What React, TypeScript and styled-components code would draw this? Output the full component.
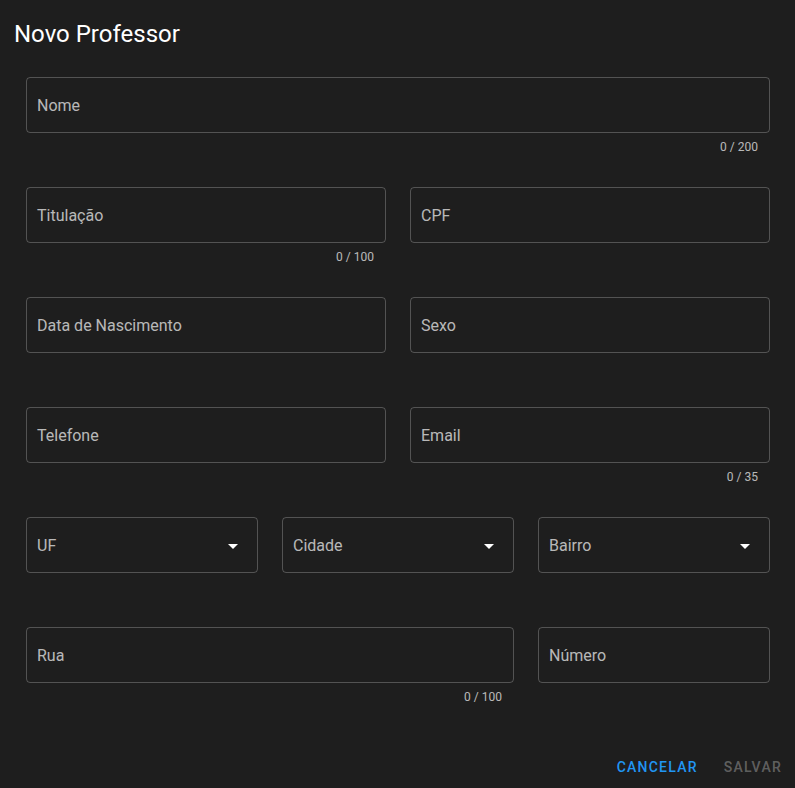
import React from "react";
import styled, { createGlobalStyle } from "styled-components";

const Global = createGlobalStyle`
  html, body { margin: 0; padding: 0; background: #1e1e1e; }
  body { font-family: Roboto, "Liberation Sans", sans-serif; -webkit-font-smoothing: antialiased; }
  * { box-sizing: border-box; }
`;

const Card = styled.div`
  width: 795px;
  height: 788px;
  background: #1e1e1e;
  color: #fff;
  display: flex;
  flex-direction: column;
  overflow: hidden;
`;

const Title = styled.div`
  padding: 18px 12px 0 14px;
  font-size: 24px;
  line-height: 32px;
  font-weight: 400;
  color: #ffffff;
`;

const Form = styled.div`
  padding: 27px 25px 0 26px;
  display: flex;
  flex-direction: column;
`;

const Row = styled.div<{ $cols: number }>`
  display: grid;
  grid-template-columns: repeat(${(p) => p.$cols}, 1fr);
  column-gap: 24px;
`;

const Cell = styled.div<{ $span?: number }>`
  grid-column: span ${(p) => p.$span ?? 1};
  height: 110px;
  display: flex;
  flex-direction: column;
`;

const Box = styled.div`
  height: 56px;
  border: 1px solid rgba(255, 255, 255, 0.24);
  border-radius: 4px;
  display: flex;
  align-items: center;
  justify-content: space-between;
  padding: 2px 12px 0 10px;
`;

const Label = styled.span`
  font-size: 16px;
  color: rgba(255, 255, 255, 0.7);
  line-height: 20px;
`;

const Counter = styled.div`
  margin-top: 8px;
  padding-right: 12px;
  text-align: right;
  font-size: 12px;
  line-height: 12px;
  color: rgba(255, 255, 255, 0.7);
`;

const Arrow = styled.svg`
  width: 24px;
  height: 24px;
  fill: #ffffff;
`;

const Actions = styled.div`
  display: flex;
  justify-content: flex-end;
  align-items: center;
  gap: 10px;
  padding: 12px 5px 0 0;
`;

const Btn = styled.button<{ $primary?: boolean }>`
  height: 36px;
  padding: 0 8px;
  background: transparent;
  border: none;
  font-family: Roboto, "Liberation Sans", sans-serif;
  font-size: 14px;
  font-weight: 500;
  letter-spacing: 1.25px;
  text-transform: uppercase;
  color: ${(p) => (p.$primary ? "#2196f3" : "rgba(255,255,255,0.3)")};
  cursor: ${(p) => (p.$primary ? "pointer" : "default")};
`;

type FieldProps = { label: string; counter?: string; select?: boolean; span?: number };

const Field = ({ label, counter, select, span }: FieldProps) => (
  <Cell $span={span}>
    <Box>
      <Label>{label}</Label>
      {select && (
        <Arrow viewBox="0 0 24 24">
          <path d="M7,10L12,15L17,10H7Z" />
        </Arrow>
      )}
    </Box>
    {counter && <Counter>{counter}</Counter>}
  </Cell>
);

export default function App() {
  return (
    <Card>
      <Global />
      <Title>Novo Professor</Title>
      <Form>
        <Row $cols={1}>
          <Field label="Nome" counter="0 / 200" />
        </Row>
        <Row $cols={2}>
          <Field label="Titulação" counter="0 / 100" />
          <Field label="CPF" />
        </Row>
        <Row $cols={2}>
          <Field label="Data de Nascimento" />
          <Field label="Sexo" />
        </Row>
        <Row $cols={2}>
          <Field label="Telefone" />
          <Field label="Email" counter="0 / 35" />
        </Row>
        <Row $cols={3}>
          <Field label="UF" select />
          <Field label="Cidade" select />
          <Field label="Bairro" select />
        </Row>
        <Row $cols={3}>
          <Field label="Rua" counter="0 / 100" span={2} />
          <Field label="Número" />
        </Row>
      </Form>
      <Actions>
        <Btn $primary>Cancelar</Btn>
        <Btn disabled>Salvar</Btn>
      </Actions>
    </Card>
  );
}
